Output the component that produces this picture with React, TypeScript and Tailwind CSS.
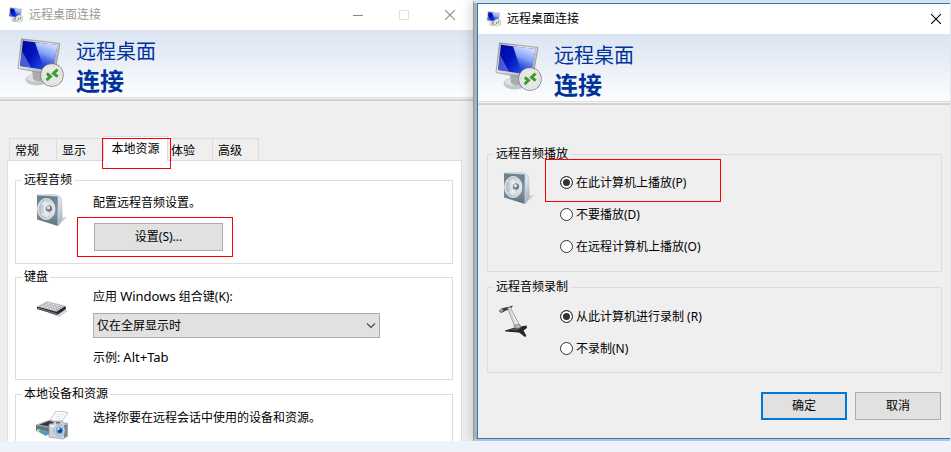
import type { ReactNode } from 'react';

const tabs = [
  { label: '常规', className: 'w-[47px] border-l pl-[5px]' },
  { label: '显示', className: 'w-[47px] border-l pl-[5px]' },
  { label: '本地资源', active: true, className: '' },
  { label: '体验', className: 'w-11 pl-[3px]' },
  { label: '高级', className: 'w-[47px] border-x pl-[5px]' },
];

const playOptions = ['在此计算机上播放(P)', '不要播放(D)', '在远程计算机上播放(O)'];
const recordOptions = ['从此计算机进行录制 (R)', '不录制(N)'];

function RemoteIcon({ id, className }: { id: string; className: string }) {
  return (
    <svg viewBox="0 0 50 52" className={className} aria-hidden="true">
      <defs>
        <linearGradient id={`${id}-screen`} x1="0" y1="0" x2="1" y2="0.5">
          <stop offset="0" stopColor="#0008a0" />
          <stop offset="0.45" stopColor="#0014bd" />
          <stop offset="1" stopColor="#2f5be8" />
        </linearGradient>
        <linearGradient id={`${id}-shine`} x1="0.7" y1="0" x2="0.4" y2="1">
          <stop offset="0" stopColor="#dfe8ff" />
          <stop offset="0.45" stopColor="#7e9ef6" />
          <stop offset="1" stopColor="#0a22c8" stopOpacity="0.3" />
        </linearGradient>
        <linearGradient id={`${id}-frame`} x1="0" y1="0" x2="1" y2="1">
          <stop offset="0" stopColor="#9b9b9b" />
          <stop offset="0.4" stopColor="#e8e8e8" />
          <stop offset="1" stopColor="#8d8d8d" />
        </linearGradient>
      </defs>
      <ellipse cx="21" cy="42.5" rx="11.5" ry="6" fill="#c3c6c8" />
      <ellipse cx="19" cy="41" rx="8" ry="3.5" fill="#dfe1e2" />
      <path d="M16 33l12 2v8q-7 3-11-1z" fill="#a9acaf" />
      <path d="M5.5 1.8L44 6.5 38.5 38 2 31.5z" fill={`url(#${id}-frame)`} stroke="#8b8b8b" strokeWidth="0.7" />
      <path d="M7 3.8L41.5 8 36.5 34 4 29z" fill={`url(#${id}-screen)`} />
      <path d="M19 5.3L41.5 8 36.5 34 28 32.600z" fill={`url(#${id}-shine)`} />
      <path d="M6 14l9 16.5L4 29z" fill="#6d83df" opacity="0.65" />
      <circle cx="36" cy="38" r="11.7" fill="#7c7c7c" />
      <circle cx="36" cy="38" r="10.8" fill="#fff" />
      <circle cx="36" cy="38" r="9.6" fill="#e7e7e7" stroke="#c4c4c4" strokeWidth="0.6" />
      <g fill="none" stroke="#3b9d2c" strokeWidth="3">
        <path d="M30.8 36.5l3.6 2.8-3.8 4" />
        <path d="M41.5 32.5l-4 3.8 4.2 3.4" />
      </g>
    </svg>
  );
}

function SpeakerIcon({ id }: { id: string }) {
  return (
    <svg viewBox="0 0 32 32" className="size-8 shrink-0" aria-hidden="true">
      <defs>
        <linearGradient id={`${id}-box`} x1="0" y1="0" x2="0" y2="1">
          <stop offset="0" stopColor="#667e8b" />
          <stop offset="0.6" stopColor="#7f929d" />
          <stop offset="1" stopColor="#5b7280" />
        </linearGradient>
        <linearGradient id={`${id}-side`} x1="0" y1="0" x2="1" y2="1">
          <stop offset="0" stopColor="#fbfcfd" />
          <stop offset="0.6" stopColor="#d5dfec" />
          <stop offset="1" stopColor="#97a6bd" />
        </linearGradient>
        <radialGradient id={`${id}-cone`} cx="0.65" cy="0.5" r="0.7">
          <stop offset="0" stopColor="#8e979f" />
          <stop offset="0.35" stopColor="#e2e6e9" />
          <stop offset="0.75" stopColor="#b3bcc5" />
          <stop offset="1" stopColor="#f0f3f5" />
        </radialGradient>
      </defs>
      <path d="M23 31l8-8-6 1z" fill="#b7bbbf" opacity="0.7" />
      <path d="M1 1l18-.5q5 .5 6.500 4.500l.8 18q-.5 4-4.300 9l-1-1z" fill={`url(#${id}-side)`} stroke="#aab5bd" strokeWidth="0.5" />
      <path d="M1 1l21 1.200V32L1 25.500z" fill={`url(#${id}-box)`} />
      <path d="M1 1l21 1.200V32" fill="none" stroke="#c8d0d5" strokeWidth="0.8" />
      <ellipse cx="10.300" cy="15" rx="8.600" ry="10.500" fill={`url(#${id}-cone)`} stroke="#eef1f3" strokeWidth="0.9" />
      <path d="M4 9.500l9 4.500-3-8zM4 20.500l9-4-2 7.500z" fill="#fff" opacity="0.4" />
      <circle cx="13" cy="14.500" r="3" fill="#6e767d" />
      <circle cx="12.400" cy="13.700" r="1.700" fill="#dce0e3" />
    </svg>
  );
}

function KeyboardIcon() {
  return (
    <svg viewBox="0 0 32 32" className="mt-1.5 size-8 shrink-0" aria-hidden="true">
      <path d="M12 20l11 4 9-6-2-1z" fill="#d2d2d4" />
      <path d="M1 13.500v2.500l20 6 9-6-.5-3z" fill="#25272d" />
      <path d="M1 15.500l20 6 .5-1L2 14.500z" fill="#70747a" />
      <path d="M1 13.500L11 8.200l19 4.500-9.500 6z" fill="#c4c6ca" />
      <path d="M3.500 13.300L11.300 9.200l16.500 3.800-7.500 4.500z" fill="#989ba1" />
      <g stroke="#fff" strokeWidth="0.900" strokeDasharray="2.200 0.600">
        <path d="M5 13l15.200 3.800" />
        <path d="M7 12l15.200 3.700" />
        <path d="M9 11l15.200 3.600" />
        <path d="M11 10l15.200 3.400" />
      </g>
    </svg>
  );
}

function DevicesIcon() {
  return (
    <svg viewBox="0 0 32 30" className="mt-[9px] h-[30px] w-8 shrink-0" aria-hidden="true">
      <path d="M20 0l12 1.500-7 10-11-2z" fill="#fff" stroke="#a4a7aa" strokeWidth="0.700" />
      <path d="M20.500 3l8 1M19.500 5l7.500 1M18.500 7l7 1" stroke="#d8dadd" strokeWidth="0.700" />
      <path d="M0 14l13-5 14 3v7l-13 5-14-4z" fill="#6b727a" />
      <path d="M0 14l13-5 14 3-12 5z" fill="#b4bac1" />
      <path d="M3 13.800l10-3.700 9 2-9 3.500z" fill="#33383e" />
      <path d="M1 18l10 2.500v4.500L1 21z" fill="#d9dde0" />
      <path d="M2 20l4-1.500 8 3.500-4 3z" fill="#4b9bd4" />
      <path d="M3 20.500l3-.5 3 2-2 1.500z" fill="#5cab59" />
      <path d="M13 13l4-.5 2-2.500h7l2 2 4 .5-.5 13-4.500 2.500-14-2z" fill="#cbd2da" stroke="#8793a0" strokeWidth="0.700" />
      <path d="M28 14l3.500-1-.3 12-3.200 2z" fill="#7d8994" />
      <path d="M14 14l13 1v2l-13-1z" fill="#eef1f4" />
      <circle cx="23.500" cy="19.500" r="5.500" fill="#e7eaed" stroke="#7f8b96" strokeWidth="0.700" />
      <circle cx="23.500" cy="19.500" r="4" fill="#65a8df" />
      <circle cx="24" cy="19.700" r="2.200" fill="#164577" />
      <circle cx="22.500" cy="18" r="1.100" fill="#e7f5ff" />
      <path d="M20 11h4v1.500h-4z" fill="#5d6770" />
    </svg>
  );
}

function MicrophoneIcon() {
  return (
    <svg viewBox="0 0 36 36" className="mt-[9px] size-9 shrink-0" aria-hidden="true">
      <g fill="none" strokeWidth="0.800">
        <path d="M9 5.500l7 17" stroke="#8c8c8c" />
        <path d="M10.500 5l7 18" stroke="#c6c6c6" />
        <path d="M12 5l9 17" stroke="#888" />
      </g>
      <path d="M0 7.500q1-3 5-3.700l6-1.300 3-1-1.500 2.500L6 7Q2 10 0 7.500z" fill="#3a3a3a" />
      <path d="M0 7q1-2.500 3.500-2.800l1 2.800q-2.500 2-4.500 0z" fill="#9a9a9a" />
      <path d="M8 4l4-1-1.500 2.500z" fill="#ddd" />
      <path d="M6 26.500l10-3 11.500-2 .5 2.500-3.500 2.500 3 5.500-1.500 1-6-4.500-14-1z" fill="#262626" />
      <path d="M10 26l7-2 5 .5-5 2z" fill="#565656" />
      <ellipse cx="18.500" cy="22.500" rx="3.600" ry="1.800" fill="#bcbcbc" stroke="#555" strokeWidth="0.600" />
    </svg>
  );
}

function CloseIcon() {
  return (
    <svg viewBox="0 0 10 10" className="size-2.5" aria-hidden="true">
      <path d="M0 0l10 10M10 0L0 10" stroke="currentColor" strokeWidth="1.100" />
    </svg>
  );
}

function TitleBar({ id, className, children }: { id: string; className: string; children: ReactNode }) {
  return (
    <div className={`flex h-[30px] items-center bg-white pl-2 ${className}`}>
      <RemoteIcon id={id} className="size-4 shrink-0" />
      <h1 className="ml-[5px] grow">远程桌面连接</h1>
      {children}
    </div>
  );
}

function Banner({ id }: { id: string }) {
  return (
    <>
      <div className="flex h-[67px] gap-2.5 bg-linear-to-b from-[#dae4f1] via-[#ebf0f8] to-[#fcfdfd] pt-[7px] pl-4 text-[#003399]">
        <RemoteIcon id={id} className="h-[52px] w-[50px] shrink-0" />
        <p>
          <span className="block text-xl leading-[30px]">远程桌面</span>
          <span className="block text-2xl leading-7 font-bold">连接</span>
        </p>
      </div>
      <div className="h-1 border-t border-b-2 border-t-[#dcdddd] border-b-[#d3d1cf] bg-[#f6f6f6]" />
    </>
  );
}

function Group({ title, className, children }: { title: string; className: string; children: ReactNode }) {
  return (
    <fieldset className={`min-w-0 border border-[#dcdcdc] ${className}`}>
      <legend className="ml-1.5 px-0.5 leading-4">{title}</legend>
      {children}
    </fieldset>
  );
}

function RadioOption({ name, label, checked, marked }: { name: string; label: string; checked: boolean; marked?: boolean }) {
  return (
    <label className="relative flex h-8 items-center gap-[3px]">
      <input
        type="radio"
        name={name}
        defaultChecked={checked}
        className="size-[13px] appearance-none rounded-full border border-[#333] bg-white checked:bg-[#333] checked:shadow-[inset_0_0_0_2px_white]"
      />
      <span className="pt-0.5">{label}</span>
      {marked && <span className="pointer-events-none absolute -top-[7px] -left-[15px] h-[43px] w-44 border border-[#f00]" />}
    </label>
  );
}

function ConnectionWindow() {
  return (
    <section className="min-w-0 bg-[#efefef]">
      <TitleBar id="left-small" className="text-[#999]">
        <div className="flex text-[#888]">
          <button aria-label="最小化" className="flex h-7 w-[46px] items-center justify-center">
            <span className="h-px w-2.5 bg-[#888]" />
          </button>
          <button aria-label="最大化" disabled className="flex h-7 w-[46px] items-center justify-center">
            <span className="size-2.5 border border-[#e2e2e2]" />
          </button>
          <button aria-label="关闭" className="flex h-7 w-[46px] items-center justify-center">
            <CloseIcon />
          </button>
        </div>
      </TitleBar>
      <Banner id="left-large" />

      <div className="mt-[35px] flex items-end pl-[9px]" role="tablist">
        {tabs.map((tab) =>
          tab.active ? (
            <button
              key={tab.label}
              role="tab"
              aria-selected="true"
              className="relative z-10 -mb-px h-[25px] w-[65px] border border-b-0 border-[#dcdcdc] bg-white"
            >
              {tab.label}
              <span className="pointer-events-none absolute top-px -left-0.5 h-[31px] w-[69px] border border-[#f00]" />
            </button>
          ) : (
            <button
              key={tab.label}
              role="tab"
              aria-selected="false"
              className={`h-[22px] border-t border-[#dcdcdc] pt-0.5 text-left ${tab.className}`}
            >
              {tab.label}
            </button>
          ),
        )}
      </div>

      <div className="mr-[11px] ml-[7px] border border-b-0 border-[#dcdcdc] bg-white pt-[11px] pr-2 pl-[7px]">
        <Group title="远程音频" className="pb-3">
          <div className="flex gap-[25px] pt-1.5 pl-5">
            <SpeakerIcon id="left-speaker" />
            <div>
              <p>配置远程音频设置。</p>
              <div className="relative mt-[11px] ml-px w-[129px]">
                <button className="h-7 w-full border border-[#adadad] bg-[#e1e1e1]">设置(S)...</button>
                <span className="pointer-events-none absolute -top-1.5 -left-[17px] h-10 w-[156px] border border-[#f00]" />
              </div>
            </div>
          </div>
        </Group>

        <Group title="键盘" className="mt-[5px] pb-[13px]">
          <div className="flex gap-[25px] pt-0.5 pl-5">
            <KeyboardIcon />
            <div className="grow">
              <label htmlFor="key-combo" className="block h-[18px]">
                应用 <span className="text-[13px]">Windows</span> 组合键(K):
              </label>
              <div className="relative mt-2 w-full max-w-[287px]">
                <select id="key-combo" className="block h-[25px] w-full appearance-none border border-[#adadad] bg-[#e1e1e1] pl-[3px]">
                  <option>仅在全屏显示时</option>
                </select>
                <svg viewBox="0 0 10 6" className="pointer-events-none absolute top-2.5 right-1 h-1.5 w-2.5" aria-hidden="true">
                  <path d="M1 .500l4 4 4-4" fill="none" stroke="#444" strokeWidth="1.100" />
                </svg>
              </div>
              <p className="mt-2.5 h-[18px]">
                示例: <span className="text-[13px]">Alt+Tab</span>
              </p>
            </div>
          </div>
        </Group>

        <Group title="本地设备和资源" className="mt-1.5 border-b-0">
          <div className="flex gap-[25px] pl-5">
            <DevicesIcon />
            <p className="pt-[7px]">选择你要在远程会话中使用的设备和资源。</p>
          </div>
        </Group>
      </div>
    </section>
  );
}

function AudioDialog() {
  return (
    <section className="relative mr-px min-w-0 border-t-[3px] border-b-2 border-l border-t-[#e0e0e0] border-b-[#c0c2c6] border-l-[#999] bg-[#b0b0b0] pl-[3px] shadow-[-2px_0_10px_rgba(0,0,0,0.16)]">
      <div className="border border-r-0 border-[#1a7fd4] bg-[#efefef]">
        <TitleBar id="right-small" className="text-black">
          <button aria-label="关闭" className="flex h-7 w-7 items-center justify-center">
            <CloseIcon />
          </button>
        </TitleBar>
        <Banner id="right-large" />

        <div className="pr-2 pl-[9px]">
          <Group title="远程音频播放" className="mt-[41px] pb-[9px]">
            <div className="flex gap-[25px] pt-1 pl-[15px]">
              <div className="pt-1.5">
                <SpeakerIcon id="right-speaker" />
              </div>
              <div>
                {playOptions.map((label, i) => (
                  <RadioOption key={label} name="play" label={label} checked={i === 0} marked={i === 0} />
                ))}
              </div>
            </div>
          </Group>

          <Group title="远程音频录制" className="mt-[7px] pb-2">
            <div className="flex gap-[25px] pl-[11px]">
              <MicrophoneIcon />
              <div className="pt-[5px]">
                {recordOptions.map((label, i) => (
                  <RadioOption key={label} name="record" label={label} checked={i === 0} />
                ))}
              </div>
            </div>
          </Group>
        </div>

        <div className="mt-[19px] flex justify-end gap-2 pr-[9px] pb-[18px]">
          <button className="h-7 w-[86px] border-2 border-[#0078d7] bg-[#e1e1e1]">确定</button>
          <button className="h-7 w-[86px] border border-[#adadad] bg-[#e1e1e1]">取消</button>
        </div>
      </div>
    </section>
  );
}

export default function App() {
  return (
    <main className="min-h-screen bg-[#edf2fb] font-['Noto_Sans','Noto_Sans_CJK_SC',sans-serif] text-xs leading-[18px] text-black">
      <div className="grid grid-cols-[473fr_478fr] overflow-hidden">
        <ConnectionWindow />
        <AudioDialog />
      </div>
    </main>
  );
}
